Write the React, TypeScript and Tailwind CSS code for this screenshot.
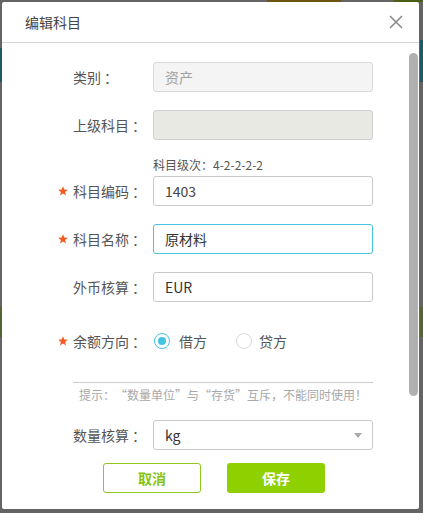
// --- 表单行 ---
function Star() {
  return (
    <svg width="10" height="10" viewBox="0 0 10 10" className="shrink-0">
      <polygon points="5,0.3 6.3,3.6 9.8,3.8 7.1,6 8,9.6 5,7.6 2,9.6 2.9,6 0.2,3.8 3.7,3.6" fill="#f15a22" />
    </svg>
  );
}

function Row({ label, required, children }: { label: string; required?: boolean; children: React.ReactNode }) {
  return (
    <div className="flex items-center h-[30px]">
      <div className="w-[16px] flex items-center justify-start pl-[1px]">{required && <Star />}</div>
      <div className="w-[80px] flex text-[14px] text-[#555] [text-spacing-trim:space-all]">
        <span>{label}</span>
        <span className="ml-[3px]">：</span>
      </div>
      {children}
    </div>
  );
}

const inputBase = 'w-[220px] h-[30px] rounded-[3px] border px-[11px] flex items-center text-[14px]';

export default function App() {
  return (
    <main className="relative min-h-[513px] bg-[#646464] p-[2px] font-['Noto_Sans_CJK_SC','Liberation_Sans',sans-serif]">
      {/* contenido detrás del overlay */}
      <span className="absolute top-0 left-[267px] w-[74px] h-[2px] bg-[#6e5410]" />
      <span className="absolute top-0 left-[394px] w-[29px] h-[2px] bg-[#4c5e14]" />
      <span className="absolute top-[48px] left-0 w-[2px] h-[34px] bg-[#1f5866]" />
      <span className="absolute top-[307px] left-0 w-[2px] h-[30px] bg-[#55652f]" />
      <span className="absolute top-[40px] right-0 w-[3px] h-[42px] bg-[#1f5866]" />
      <span className="absolute top-[307px] right-0 w-[3px] h-[30px] bg-[#55652f]" />

      <div className="relative w-[417px] h-[507px] bg-white rounded-[2px] flex flex-col">
        {/* cabecera */}
        <div className="h-[41px] flex items-center justify-between pl-[23px] pr-[16px] border-b border-[#d6d6d6]">
          <span className="text-[14px] text-[#444]">编辑科目</span>
          <svg width="14" height="14" viewBox="0 0 14 14">
            <path d="M1 1L13 13M13 1L1 13" stroke="#8a8a8a" strokeWidth="1.6" />
          </svg>
        </div>

        {/* cuerpo */}
        <div className="flex flex-col pl-[55px] pt-[19px]">
          <Row label="类别">
            <div className={`${inputBase} bg-[#f4f4f4] border-[#d9d9d9] text-[#a0a0a0] text-[13px]`}>资产</div>
          </Row>
          <div className="mt-[18px]">
            <Row label="上级科目">
              <div className={`${inputBase} bg-[#e9e9e3] border-[#cfcfcf]`} />
            </Row>
          </div>
          <div className="mt-[17px] h-[16px] pl-[96px] text-[12px] leading-[16px] text-[#555]">科目级次：4-2-2-2-2</div>
          <div className="mt-[3px]">
            <Row label="科目编码" required>
              <div className={`${inputBase} border-[#c9c9c9] text-[#444]`}>1403</div>
            </Row>
          </div>
          <div className="mt-[18px]">
            <Row label="科目名称" required>
              <div className={`${inputBase} border-[#45c4e0] text-[#333]`}>原材料</div>
            </Row>
          </div>
          <div className="mt-[18px]">
            <Row label="外币核算">
              <div className={`${inputBase} border-[#c9c9c9] text-[#333]`}>EUR</div>
            </Row>
          </div>
          <div className="mt-[24px]">
            <Row label="余额方向" required>
              <div className="flex items-center pl-[1px] text-[14px] text-[#555]">
                <span className="w-[16px] h-[16px] rounded-full border-[1.5px] border-[#45c4e0] flex items-center justify-center">
                  <span className="w-[8px] h-[8px] rounded-full bg-[#45c4e0]" />
                </span>
                <span className="ml-[9px]">借方</span>
                <span className="ml-[29px] w-[16px] h-[16px] rounded-full border border-[#dcdcdc]" />
                <span className="ml-[7px]">贷方</span>
              </div>
            </Row>
          </div>
          <div className="mt-[26px] ml-[16px] w-[300px] h-px bg-[#cccccc]" />
          <div className="mt-[4px] ml-[22px] h-[16px] text-[12px] leading-[16px] text-[#a8a8a8] [text-spacing-trim:space-all]">
            提示：“数量单位”与“存货”互斥，不能同时使用！
          </div>
          <div className="mt-[17px]">
            <Row label="数量核算">
              <div className={`${inputBase} border-[#c9c9c9] text-[#333] justify-between pr-[10px]`}>
                <span>kg</span>
                <svg width="8" height="5" viewBox="0 0 8 5">
                  <polygon points="0,0 8,0 4,5" fill="#aaaaaa" />
                </svg>
              </div>
            </Row>
          </div>

          <div className="mt-[13px] flex gap-[26px] pl-[46px]">
            <button type="button" className="w-[98px] h-[30px] rounded-[3px] border border-[#8cc820] text-[14px] font-bold text-[#86c414]">
              取消
            </button>
            <button type="button" className="w-[98px] h-[30px] rounded-[3px] bg-[#8fd000] text-[14px] font-bold text-white">
              保存
            </button>
          </div>
        </div>

        {/* barra de desplazamiento */}
        <span className="absolute top-[51px] left-[407px] w-[9px] h-[343px] rounded-full bg-[#b0b0b0]" />
      </div>
    </main>
  );
}
